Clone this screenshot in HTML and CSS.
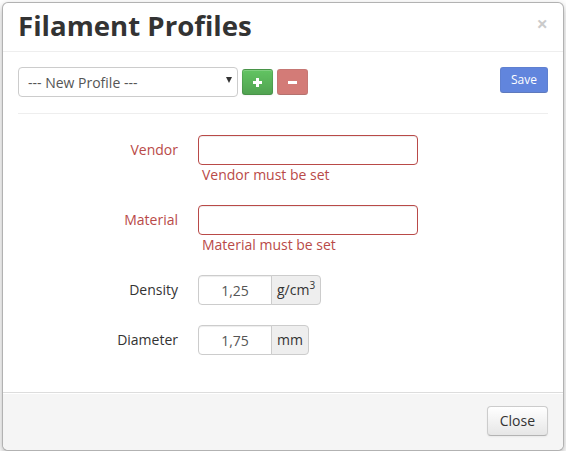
FILE: index.html
```html
<!DOCTYPE html>
<html>
<head>
<meta charset="utf-8">
<title>Filament Profiles</title>
<link rel="stylesheet" href="styles.css">
</head>
<body>
<div class="modal">
  <div class="modal-header">
    <button class="close" type="button">×</button>
    <h3 class="modal-title">Filament Profiles</h3>
  </div>
  <div class="modal-body">
    <div class="toolbar">
      <div class="select-wrap">
        <select class="profile-select"><option>--- New Profile ---</option></select>
        <span class="select-caret"></span>
      </div>
      <button class="btn btn-small btn-success icon-btn" type="button">
        <svg width="9" height="9" viewBox="0 0 9 9"><rect x="3" y="0" width="3" height="9" fill="#fff"/><rect x="0" y="3" width="9" height="3" fill="#fff"/></svg>
      </button>
      <button class="btn btn-small btn-danger is-disabled icon-btn" type="button">
        <svg width="9" height="9" viewBox="0 0 9 9"><rect x="0" y="3" width="9" height="3" fill="#fff"/></svg>
      </button>
      <button class="btn btn-small btn-primary is-disabled save-btn" type="button">Save</button>
    </div>
    <hr class="divider">
    <form class="form-horizontal">
      <div class="control-group error">
        <label class="control-label">Vendor</label>
        <div class="controls">
          <input class="text-input input-wide" type="text">
          <span class="help-block">Vendor must be set</span>
        </div>
      </div>
      <div class="control-group error">
        <label class="control-label">Material</label>
        <div class="controls">
          <input class="text-input input-wide" type="text">
          <span class="help-block">Material must be set</span>
        </div>
      </div>
      <div class="control-group">
        <label class="control-label">Density</label>
        <div class="controls">
          <div class="input-append">
            <input class="text-input input-mini" type="text" value="1,25">
            <span class="add-on">g/cm<sup class="sup">3</sup></span>
          </div>
        </div>
      </div>
      <div class="control-group">
        <label class="control-label">Diameter</label>
        <div class="controls">
          <div class="input-append">
            <input class="text-input input-mini" type="text" value="1,75">
            <span class="add-on">mm</span>
          </div>
        </div>
      </div>
    </form>
  </div>
  <div class="modal-footer">
    <button class="btn" type="button">Close</button>
  </div>
</div>
</body>
</html>
```

FILE: styles.css
```css
* { box-sizing: border-box; }
html, body {
  margin: 0;
  padding: 0;
  background: #fff;
}
body {
  font-family: "Open Sans", "Liberation Sans", sans-serif;
  font-size: 14px;
  line-height: 20px;
  color: #333;
}
.modal {
  margin: 2px 0 0 2px;
  width: 562px;
  height: 449px;
  display: flex;
  flex-direction: column;
  background: #fff;
  border: 1px solid rgba(0, 0, 0, 0.3);
  border-radius: 6px;
  box-shadow: 0 3px 7px rgba(0, 0, 0, 0.3);
}
.modal-header {
  padding: 7px 15px 11px;
  border-bottom: 1px solid #eee;
}
.modal-title {
  margin: 0;
  font-size: 27.6px;
  line-height: 30px;
  font-weight: 700;
  color: #333;
}
.close {
  float: right;
  margin-top: 4px;
  padding: 0;
  border: 0;
  background: transparent;
  font-family: "Open Sans", "Liberation Sans", sans-serif;
  font-size: 20px;
  font-weight: 700;
  line-height: 20px;
  color: #000;
  opacity: 0.2;
  cursor: pointer;
}
.modal-body {
  flex: 1;
  padding: 15px;
}
.toolbar {
  display: flex;
  align-items: center;
  gap: 4px;
  height: 30px;
}
.select-wrap {
  position: relative;
  width: 220px;
  height: 30px;
}
.profile-select {
  -webkit-appearance: none;
  appearance: none;
  width: 220px;
  height: 30px;
  padding: 0 20px 0 9px;
  border: 1px solid #ccc;
  border-radius: 4px;
  background: #fff;
  font-family: "Open Sans", "Liberation Sans", sans-serif;
  font-size: 14px;
  color: #555;
}
.select-caret {
  position: absolute;
  right: 6px;
  top: 10px;
  width: 0;
  height: 0;
  border-left: 3px solid transparent;
  border-right: 3px solid transparent;
  border-top: 6px solid #333;
}
.btn {
  display: inline-block;
  padding: 4px 12px;
  font-family: "Open Sans", "Liberation Sans", sans-serif;
  font-size: 14px;
  line-height: 20px;
  color: #333;
  text-align: center;
  background-color: #f5f5f5;
  background-image: linear-gradient(to bottom, #fff, #e6e6e6);
  border: 1px solid #ccc;
  border-bottom-color: #b3b3b3;
  border-radius: 4px;
  box-shadow: inset 0 1px 0 rgba(255, 255, 255, 0.2), 0 1px 2px rgba(0, 0, 0, 0.05);
  cursor: pointer;
}
.btn-small {
  padding: 2px 10px;
  font-size: 12px;
  line-height: 20px;
  border-radius: 3px;
}
.icon-btn {
  width: 31px;
  height: 26px;
  padding: 0;
  display: flex;
  align-items: center;
  justify-content: center;
}
.btn-success {
  color: #fff;
  background-image: linear-gradient(to bottom, #62c462, #51a351);
  border-color: rgba(0, 0, 0, 0.1) rgba(0, 0, 0, 0.1) rgba(0, 0, 0, 0.25);
}
.btn-danger {
  color: #fff;
  background-color: #bd362f;
  border-color: rgba(0, 0, 0, 0.1) rgba(0, 0, 0, 0.1) rgba(0, 0, 0, 0.25);
}
.btn-primary {
  color: #fff;
  background-color: #0d44cc;
  border-color: rgba(0, 0, 0, 0.1) rgba(0, 0, 0, 0.1) rgba(0, 0, 0, 0.25);
}
.is-disabled {
  background-image: none;
  opacity: 0.65;
  box-shadow: none;
  cursor: default;
}
.save-btn {
  margin-left: auto;
  align-self: flex-start;
  height: 26px;
  padding: 2px 10px;
}
.divider {
  margin: 16px 0 20px;
  border: 0;
  border-top: 1px solid #eee;
  border-bottom: 1px solid #fff;
}
.form-horizontal {
  margin: 0;
}
.control-group {
  display: flex;
  margin-bottom: 20px;
}
.control-label {
  width: 160px;
  flex: none;
  padding-top: 5px;
  text-align: right;
  color: #333;
}
.controls {
  margin-left: 20px;
}
.text-input {
  display: block;
  height: 30px;
  padding: 4px 6px;
  border: 1px solid #ccc;
  border-radius: 4px;
  background: #fff;
  font-family: "Open Sans", "Liberation Sans", sans-serif;
  font-size: 14px;
  line-height: 20px;
  color: #555;
  box-shadow: inset 0 1px 1px rgba(0, 0, 0, 0.075);
}
.input-wide { width: 220px; }
.input-mini {
  width: 74px;
  text-align: center;
  border-radius: 4px 0 0 4px;
}
.help-block {
  display: block;
  padding-left: 4px;
  margin-top: 0;
}
.error .control-label,
.error .help-block {
  color: #b94a48;
}
.error .text-input {
  border-color: #b94a48;
}
.input-append {
  display: flex;
}
.add-on {
  display: block;
  height: 30px;
  padding: 4px 5px;
  margin-left: -1px;
  background: #eee;
  border: 1px solid #ccc;
  border-radius: 0 4px 4px 0;
  font-size: 14px;
  line-height: 20px;
  color: #333;
  white-space: nowrap;
}
.sup {
  font-size: 10px;
  line-height: 0;
  vertical-align: 6px;
}
.modal-footer {
  padding: 13px 15px 14px;
  text-align: right;
  background: #f5f5f5;
  border-top: 1px solid #ddd;
  border-radius: 0 0 6px 6px;
  box-shadow: inset 0 1px 0 #fff;
}
```
